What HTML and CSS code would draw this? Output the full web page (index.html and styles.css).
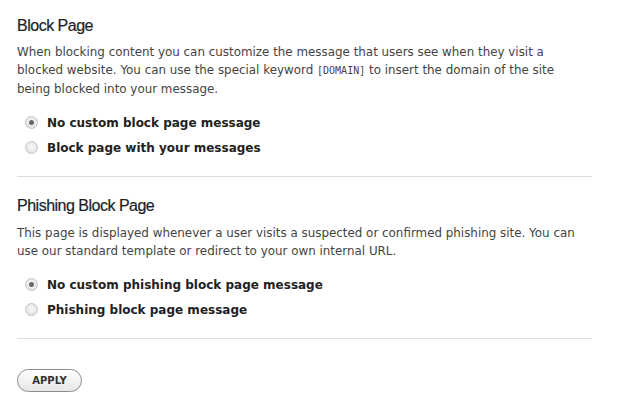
FILE: index.html
```html
<!DOCTYPE html>
<html lang="en">
<head>
  <meta charset="UTF-8">
  <title>Block Page</title>
  <link rel="stylesheet" href="styles.css">
</head>
<body>
  <div class="panel">
    <section class="block">
      <h2>Block Page</h2>
      <p>When blocking content you can customize the message that users see when they visit a blocked website. You can use the special keyword <code>[DOMAIN]</code> to insert the domain of the site being blocked into your message.</p>
      <ul class="choices">
        <li><span class="radio checked"></span>No custom block page message</li>
        <li><span class="radio"></span>Block page with your messages</li>
      </ul>
    </section>
    <section class="block">
      <h2>Phishing Block Page</h2>
      <p>This page is displayed whenever a user visits a suspected or confirmed phishing site. You can use our standard template or redirect to your own internal URL.</p>
      <ul class="choices">
        <li><span class="radio checked"></span>No custom phishing block page message</li>
        <li><span class="radio"></span>Phishing block page message</li>
      </ul>
    </section>
    <button class="apply">APPLY</button>
  </div>
</body>
</html>
```

FILE: styles.css
```css
html,
body {
  margin: 0;
  padding: 0;
  background: #fff;
}

.panel {
  width: 575px;
  padding: 15px 0 0 17px;
  font-family: "DejaVu Sans", Verdana, sans-serif;
  color: #444;
}

.block {
  border-bottom: 1px solid #ddd;
  padding-bottom: 16px;
  margin-bottom: 18px;
}

.block + .block h2 {
  margin-bottom: 7px;
}

h2 {
  margin: 0 0 6px;
  font-family: "Liberation Sans", Arial, sans-serif;
  font-size: 16px;
  font-weight: normal;
  letter-spacing: -0.5px;
  color: #1e1e1e;
  line-height: 22px;
  -webkit-text-stroke: 0.2px #1e1e1e;
}

p {
  margin: 0;
  max-width: 562px;
  font-size: 11.9px;
  line-height: 18px;
}

code {
  font-family: "DejaVu Sans Mono", monospace;
  font-size: 10px;
}

.choices {
  list-style: none;
  margin: 12px 0 0;
  padding: 0 0 0 8px;
}

.choices li {
  display: flex;
  align-items: center;
  height: 25px;
  font-size: 12px;
  font-weight: bold;
  color: #222;
}

.radio {
  width: 13px;
  height: 13px;
  border-radius: 50%;
  border: 1px solid #c6c6c6;
  background: radial-gradient(circle at 50% 45%, #f2f2f2 30%, #d4d4d4);
  margin-right: 9px;
  position: relative;
  box-sizing: border-box;
}

.radio.checked::after {
  content: '';
  position: absolute;
  left: 3px;
  top: 3px;
  width: 5px;
  height: 5px;
  border-radius: 50%;
  background: #666;
  box-shadow: 0 0 0 1px #f4f4f4;
}

.apply {
  margin-top: 12px;
  width: 65px;
  height: 23px;
  border: 1px solid #8e8e8e;
  border-radius: 12px;
  background: linear-gradient(#fff, #e6e6e6);
  box-shadow: 0 1px 1px rgba(0, 0, 0, 0.08);
  font-family: "DejaVu Sans", Verdana, sans-serif;
  font-size: 10px;
  font-weight: bold;
  color: #333;
  padding: 0;
}
```
